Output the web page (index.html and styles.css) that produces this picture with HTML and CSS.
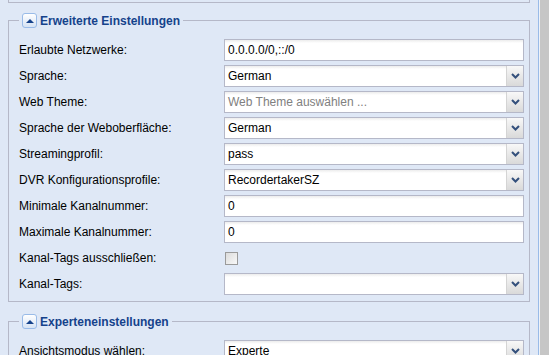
FILE: index.html
```html
<!DOCTYPE html>
<html lang="de">
<head>
    <meta charset="UTF-8">
    <title>Konfiguration</title>
    <link rel="stylesheet" href="styles.css">
</head>
<body>
    <div class="layout">
        <div class="panel">
            <div class="stub"></div>

            <fieldset class="group">
                <legend><span class="legend-inner"><span class="toggle"><span class="arrow"></span></span>Erweiterte Einstellungen</span></legend>

                <div class="row">
                    <label class="label">Erlaubte Netzwerke:</label>
                    <div class="field"><span class="value">0.0.0.0/0,::/0</span></div>
                </div>
                <div class="row">
                    <label class="label">Sprache:</label>
                    <div class="field combo"><span class="value">German</span><span class="trigger"><svg width="9" height="6" viewBox="0 0 9 6"><path d="M1 1 L4.5 4.5 L8 1" fill="none" stroke="#34507c" stroke-width="2"/></svg></span></div>
                </div>
                <div class="row">
                    <label class="label">Web Theme:</label>
                    <div class="field combo"><span class="value empty">Web Theme auswählen ...</span><span class="trigger"><svg width="9" height="6" viewBox="0 0 9 6"><path d="M1 1 L4.5 4.5 L8 1" fill="none" stroke="#34507c" stroke-width="2"/></svg></span></div>
                </div>
                <div class="row">
                    <label class="label">Sprache der Weboberfläche:</label>
                    <div class="field combo"><span class="value">German</span><span class="trigger"><svg width="9" height="6" viewBox="0 0 9 6"><path d="M1 1 L4.5 4.5 L8 1" fill="none" stroke="#34507c" stroke-width="2"/></svg></span></div>
                </div>
                <div class="row">
                    <label class="label">Streamingprofil:</label>
                    <div class="field combo"><span class="value">pass</span><span class="trigger"><svg width="9" height="6" viewBox="0 0 9 6"><path d="M1 1 L4.5 4.5 L8 1" fill="none" stroke="#34507c" stroke-width="2"/></svg></span></div>
                </div>
                <div class="row">
                    <label class="label">DVR Konfigurationsprofile:</label>
                    <div class="field combo"><span class="value">RecordertakerSZ</span><span class="trigger"><svg width="9" height="6" viewBox="0 0 9 6"><path d="M1 1 L4.5 4.5 L8 1" fill="none" stroke="#34507c" stroke-width="2"/></svg></span></div>
                </div>
                <div class="row">
                    <label class="label">Minimale Kanalnummer:</label>
                    <div class="field"><span class="value">0</span></div>
                </div>
                <div class="row">
                    <label class="label">Maximale Kanalnummer:</label>
                    <div class="field"><span class="value">0</span></div>
                </div>
                <div class="row">
                    <label class="label">Kanal-Tags ausschließen:</label>
                    <span class="checkbox"></span>
                </div>
                <div class="row">
                    <label class="label">Kanal-Tags:</label>
                    <div class="field combo"><span class="value"></span><span class="trigger"><svg width="9" height="6" viewBox="0 0 9 6"><path d="M1 1 L4.5 4.5 L8 1" fill="none" stroke="#34507c" stroke-width="2"/></svg></span></div>
                </div>
            </fieldset>

            <fieldset class="group">
                <legend><span class="legend-inner"><span class="toggle"><span class="arrow"></span></span>Experteneinstellungen</span></legend>

                <div class="row">
                    <label class="label">Ansichtsmodus wählen:</label>
                    <div class="field combo"><span class="value">Experte</span><span class="trigger"><svg width="9" height="6" viewBox="0 0 9 6"><path d="M1 1 L4.5 4.5 L8 1" fill="none" stroke="#34507c" stroke-width="2"/></svg></span></div>
                </div>
            </fieldset>
        </div>
        <div class="scrollbar"></div>
    </div>
</body>
</html>
```

FILE: styles.css
```css
*{
    margin: 0;
    padding: 0;
    box-sizing: border-box;
}
body{
    font-family: "Liberation Sans", Arial, sans-serif;
    font-size: 12px;
    color: #000;
    background: #dfe8f6;
    overflow: hidden;
}
.layout{
    display: flex;
    height: 355px;
}
.panel{
    width: 539px;
    flex-shrink: 0;
    background: #dfe8f6;
    border-right: 1px solid #99bbe8;
    overflow: hidden;
}
.scrollbar{
    flex: 1;
    background: #c6c6c6;
    border-left: 1px solid #eef2f8;
}
.stub{
    height: 3px;
    margin: 0 8px 10px;
    border: 1px solid #b5b8c8;
    border-top: 0;
}
.group{
    margin: 0 8px 12px;
    border: 1px solid #b5b8c8;
    padding: 11px 5px 6px 10px;
}
.group legend{
    padding: 0 3px;
}
.legend-inner{
    display: flex;
    align-items: center;
    height: 15px;
    font-size: 12px;
    font-weight: bold;
    color: #15428b;
}
.toggle{
    display: flex;
    align-items: center;
    justify-content: center;
    width: 15px;
    height: 15px;
    margin-right: 3px;
    border: 1px solid #99bbe8;
    border-radius: 3px;
    background: linear-gradient(#ffffff, #d6e3f4);
}
.arrow{
    width: 0;
    height: 0;
    border-left: 4px solid transparent;
    border-right: 4px solid transparent;
    border-bottom: 4px solid #15428b;
}
.row{
    display: flex;
    align-items: center;
    height: 22px;
    margin-bottom: 4px;
}
.row:last-child{
    margin-bottom: 0;
}
.label{
    width: 205px;
    flex-shrink: 0;
}
.field{
    flex: 1;
    display: flex;
    align-items: center;
    height: 22px;
    border: 1px solid #b5b8c8;
    background: linear-gradient(#ececec 0, #ffffff 3px);
}
.value{
    flex: 1;
    padding-left: 3px;
    white-space: nowrap;
}
.value.empty{
    color: #808080;
}
.trigger{
    display: flex;
    align-items: center;
    justify-content: center;
    width: 17px;
    height: 100%;
    border-left: 1px solid #d4d4d4;
    background: linear-gradient(#f8f8f8, #d9d9d9);
}
.checkbox{
    width: 13px;
    height: 13px;
    margin-left: 1px;
    border: 1px solid #9a9a9a;
    background: linear-gradient(135deg, #dcdcdc, #f8f8f8);
}
```
